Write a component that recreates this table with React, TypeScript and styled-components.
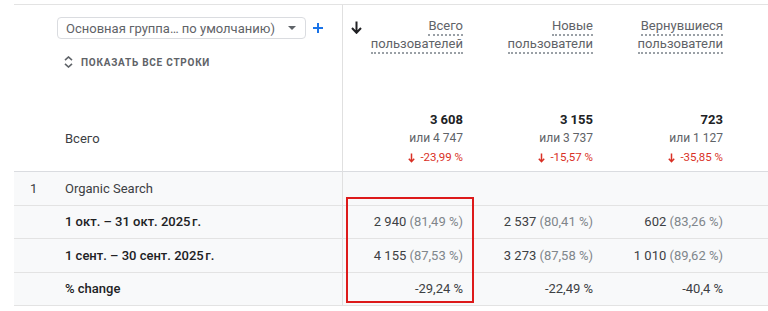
import React from "react";
import styled, { createGlobalStyle } from "styled-components";

const Global = createGlobalStyle`
  html, body { margin: 0; padding: 0; background: #fff; }
  body { font-family: Roboto, "Liberation Sans", Arial, sans-serif; color: #3c4043; }
`;

const Page = styled.div`
  padding: 4px 0 0 14px;
  position: relative;
  width: 754px;
  overflow: hidden;
`;

const Table = styled.div`
  display: grid;
  grid-template-columns: 329px 130px 130px 130px 1fr;
  border-top: 1px solid #e3e3e3;
`;

const DimHeader = styled.div`
  height: 167px;
  border-right: 1px solid #e0e0e0;
  border-bottom: 1px solid #dadce0;
  display: flex;
  flex-direction: column;
  box-sizing: border-box;
`;

const DropRow = styled.div`
  display: flex;
  align-items: center;
  margin: 12px 0 0 43px;
  gap: 6px;
`;

const Dropdown = styled.div`
  width: 249px;
  height: 22px;
  box-sizing: border-box;
  border: 1px solid #dadce0;
  border-radius: 4px;
  display: flex;
  align-items: center;
  padding: 0 9px 0 8px;
  font-size: 13px;
  color: #5f6368;
  justify-content: space-between;
`;

const Caret = styled.span`
  width: 0;
  height: 0;
  border-left: 4px solid transparent;
  border-right: 4px solid transparent;
  border-top: 4px solid #5f6368;
`;

const ShowAll = styled.div`
  display: flex;
  align-items: center;
  gap: 8px;
  margin: 17px 0 0 50px;
  font-size: 10px;
  font-weight: 700;
  letter-spacing: 0.75px;
  color: #5f6368;
`;

const TotalLabel = styled.div`
  margin: auto 0 25px 51px;
  font-size: 13px;
  color: #3c4043;
`;

const MetricHeader = styled.div`
  height: 167px;
  box-sizing: border-box;
  border-bottom: 1px solid #dadce0;
  padding: 13px 10px 4px 0;
  display: flex;
  flex-direction: column;
  align-items: flex-end;
  justify-content: space-between;
  position: relative;
`;

const SortArrow = styled.svg`
  position: absolute;
  left: 8px;
  top: 16px;
`;

const HeadTitle = styled.div`
  text-align: right;
  font-size: 13px;
  line-height: 18px;
  color: #5f6368;
  display: flex;
  flex-direction: column;
  align-items: flex-end;
`;

const Dotted = styled.span`
  border-bottom: 2px dotted #9aa0a6;
  line-height: 16px;
`;

const Totals = styled.div`
  display: flex;
  flex-direction: column;
  align-items: flex-end;
  line-height: 19px;
`;

const TotalValue = styled.div`
  font-size: 13px;
  font-weight: 700;
  color: #202124;
`;

const Compare = styled.div`
  font-size: 12px;
  color: #5f6368;
`;

const Delta = styled.div`
  font-size: 11.5px;
  color: #d93025;
  display: flex;
  align-items: center;
  gap: 5px;
`;

const Filler = styled.div<{ $head?: boolean }>`
  border-bottom: 1px solid ${(p) => (p.$head ? "#dadce0" : "#e3e3e3")};
  background: ${(p) => (p.$head ? "#fff" : "#f8f9fa")};
`;

const DimCell = styled.div`
  height: 33.5px;
  box-sizing: border-box;
  border-right: 1px solid #e0e0e0;
  border-bottom: 1px solid #e3e3e3;
  background: #f8f9fa;
  display: grid;
  grid-template-columns: 35px 1fr;
  align-items: center;
  padding-left: 16px;
  font-size: 13px;
  color: #3c4043;
`;

const Label = styled.span<{ $bold?: boolean }>`
  font-weight: ${(p) => (p.$bold ? 500 : 400)};
  color: ${(p) => (p.$bold ? "#202124" : "#3c4043")};
`;

const ValCell = styled.div`
  height: 33.5px;
  box-sizing: border-box;
  border-bottom: 1px solid #e3e3e3;
  background: #f8f9fa;
  display: flex;
  align-items: center;
  justify-content: flex-end;
  padding-right: 10px;
  font-size: 13px;
  color: #3c4043;
  white-space: pre;
`;

const Pct = styled.span`
  color: #80868b;
`;

const Highlight = styled.div`
  position: absolute;
  left: 346px;
  top: 197px;
  width: 128px;
  height: 106px;
  box-sizing: border-box;
  border: 2px solid #dd1a1a;
  pointer-events: none;
`;

const metrics = [
  { t1: "Всего", t2: "пользователей", total: "3 608", cmp: "или 4 747", delta: "-23,99 %" },
  { t1: "Новые", t2: "пользователи", total: "3 155", cmp: "или 3 737", delta: "-15,57 %" },
  { t1: "Вернувшиеся", t2: "пользователи", total: "723", cmp: "или 1 127", delta: "-35,85 %" },
];

const rows: { rank?: string; label: string; bold?: boolean; vals: [string, string?][] }[] = [
  { rank: "1", label: "Organic Search", vals: [["", ""], ["", ""], ["", ""]] },
  {
    label: "1 окт. – 31 окт. 2025\u202Fг.",
    bold: true,
    vals: [["2 940", "(81,49 %)"], ["2 537", "(80,41 %)"], ["602", "(83,26 %)"]],
  },
  {
    label: "1 сент. – 30 сент. 2025\u202Fг.",
    bold: true,
    vals: [["4 155", "(87,53 %)"], ["3 273", "(87,58 %)"], ["1 010", "(89,62 %)"]],
  },
  { label: "% change", bold: true, vals: [["-29,24 %"], ["-22,49 %"], ["-40,4 %"]] },
];

const DownSmall = () => (
  <svg width="7" height="10" viewBox="0 0 7 10">
    <path d="M3.5 0.5v8M0.8 5.8l2.7 2.9 2.7-2.9" stroke="#d93025" strokeWidth="1.5" fill="none" />
  </svg>
);

export default function App() {
  return (
    <>
      <Global />
      <Page>
        <Table>
          <DimHeader>
            <DropRow>
              <Dropdown>
                <span>Основная группа… по умолчанию)</span>
                <Caret />
              </Dropdown>
              <svg width="12" height="12" viewBox="0 0 12 12">
                <path d="M6 1v10M1 6h10" stroke="#1a73e8" strokeWidth="2" />
              </svg>
            </DropRow>
            <ShowAll>
              <svg width="9" height="12" viewBox="0 0 9 12">
                <path d="M1 4.2L4.5 1 8 4.2M1 7.8L4.5 11 8 7.8" stroke="#5f6368" strokeWidth="1.6" fill="none" />
              </svg>
              ПОКАЗАТЬ ВСЕ СТРОКИ
            </ShowAll>
            <TotalLabel>Всего</TotalLabel>
          </DimHeader>
          {metrics.map((m, i) => (
            <MetricHeader key={i}>
              {i === 0 && (
                <SortArrow width="11" height="13" viewBox="0 0 11 13">
                  <path d="M5.5 0.5v11M1 7l4.5 4.8L10 7" stroke="#202124" strokeWidth="2" fill="none" />
                </SortArrow>
              )}
              <HeadTitle>
                <Dotted>{m.t1}</Dotted>
                <Dotted>{m.t2}</Dotted>
              </HeadTitle>
              <Totals>
                <TotalValue>{m.total}</TotalValue>
                <Compare>{m.cmp}</Compare>
                <Delta>
                  <DownSmall />
                  {m.delta}
                </Delta>
              </Totals>
            </MetricHeader>
          ))}
          <Filler $head />
          {rows.map((r, ri) => (
            <React.Fragment key={ri}>
              <DimCell>
                <span>{r.rank ?? ""}</span>
                <Label $bold={r.bold}>{r.label}</Label>
              </DimCell>
              {r.vals.map((v, vi) => (
                <ValCell key={vi}>
                  {v[0]}
                  {v[1] ? <Pct> {v[1]}</Pct> : null}
                </ValCell>
              ))}
              <Filler />
            </React.Fragment>
          ))}
        </Table>
        <Highlight />
      </Page>
    </>
  );
}
